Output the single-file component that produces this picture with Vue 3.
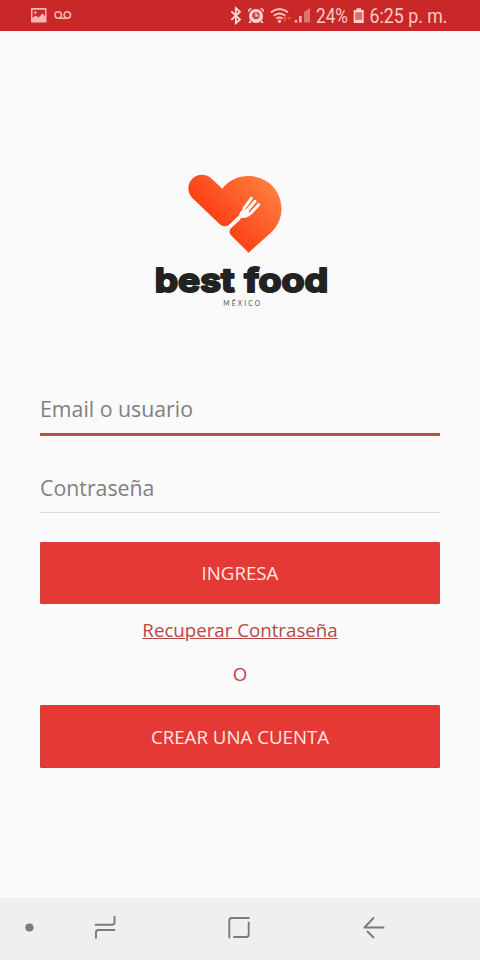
<script setup>
import { ref } from 'vue'

const user = ref('')
const password = ref('')
</script>

<template>
  <div class="screen">
    <header class="status">
      <svg width="480" height="31" viewBox="0 0 480 31">
        <g fill="#f8b5b2">
          <path fill-rule="evenodd" d="M32 8h13.500q1 0 1 1v12.500q0 1-1 1H32q-1 0-1-1V9q0-1 1-1zM32.500 9.700V18l3-2.500 3 2 4-4 2.600 2.700V9.700z" />
          <circle cx="35.300" cy="12.500" r="1.300" />
        </g>
        <g fill="none" stroke="#f8b5b2" stroke-width="1.500">
          <circle cx="58.200" cy="15" r="3.200" />
          <circle cx="67.300" cy="15" r="3.200" />
          <path d="M58.200 18.300h9.100" />
        </g>
        <path d="M231.300 11.300l8.700 8.200-4.200 3.700V8l4.200 3.700-8.700 8.200" fill="none" stroke="#ffd6d3" stroke-width="1.800" />
        <g fill="#ffd3cf">
          <circle cx="256" cy="16" r="7" />
          <path d="M248.200 12.200q-1-4 4-4.200zM263.800 12.200q1-4-4-4.200zM250 20l-1.500 3h3zM262 20l1.500 3h-3z" />
        </g>
        <circle cx="256" cy="15.500" r="3.800" fill="#d04444" />
        <path d="M256 12.500v3.300h2.600" fill="none" stroke="#ffd3cf" stroke-width="1.300" />
        <g fill="none" stroke="#ffc4c0" stroke-width="1.900">
          <path d="M271 12.300q8.500-6.600 17 0M273.700 15.700q5.800-4.600 11.600 0M276.500 18.800q3-2.400 6 0" />
        </g>
        <circle cx="279.500" cy="21.300" r="1.600" fill="#ffc4c0" />
        <path d="M282.500 18.500l2.200-3 2.200 3h-1.400v3h-1.600v-3zM287 17h4l-2 3z" fill="#f0564c" />
        <g fill="#f5aaa6">
          <rect x="294.800" y="20" width="2.500" height="2.500" />
          <rect x="299" y="16" width="2.700" height="6.500" />
        </g>
        <path d="M304 12l6-4v14.500h-6z" fill="#e2726f" />
        <text x="316" y="23" textLength="32" lengthAdjust="spacingAndGlyphs">24%</text>
        <path d="M356.500 8.300h4.500v1.700h2.700v13h-10V10h2.800z" fill="#ffd0cd" />
        <rect x="355.200" y="12.300" width="7" height="7.500" fill="#d9726f" />
        <text x="369.500" y="23" textLength="78" lengthAdjust="spacingAndGlyphs">6:25 p. m.</text>
      </svg>
    </header>

    <main class="content">
      <svg class="logo" width="200" height="160" viewBox="0 0 600 480">
        <defs>
          <linearGradient id="heart" gradientUnits="userSpaceOnUse" x1="390" y1="80" x2="250" y2="210">
            <stop offset="0" stop-color="#ff7a3d" />
            <stop offset="1" stop-color="#fc4116" />
          </linearGradient>
        </defs>
        <path d="M157 114A41 41 0 0 1 215 56L247 86Q276 48 327 48A98 98 0 0 1 396 215L326 278L273 226Q264 215 273 205L302 178L292 170L271 192Q256 205 241 194Z" fill="url(#heart)" />
        <path d="M261 208L307 164" stroke="#fafafa" stroke-width="10" />
        <path d="M298 173Q296 158 307 149L313 142L330 158L340 155L329 168Q315 177 298 173Z" fill="#fafafa" />
        <path d="M312 145L334 115M321 152L345 124M332 160L356 134" stroke="#fafafa" stroke-width="9" stroke-linecap="round" />
        <g class="brand">
          <text x="44" y="396" textLength="240" lengthAdjust="spacingAndGlyphs">best</text>
          <text x="313" y="396" textLength="252" lengthAdjust="spacingAndGlyphs">food</text>
        </g>
        <text class="country" x="250" y="437" textLength="110">MÉXICO</text>
      </svg>

      <form class="form" @submit.prevent>
        <input v-model="user" class="field active" type="text" placeholder="Email o usuario" />
        <input v-model="password" class="field" type="password" placeholder="Contraseña" />
        <button class="button" type="submit">INGRESA</button>
        <a class="recover">Recuperar Contraseña</a>
        <span class="or">O</span>
        <button class="button create" type="button">CREAR UNA CUENTA</button>
      </form>
    </main>

    <nav class="navigation">
      <svg width="480" height="62" viewBox="0 0 480 62" fill="none" stroke="#7b7b7b" stroke-width="1.900" stroke-linecap="round" stroke-linejoin="round">
        <circle cx="29.400" cy="29.500" r="4.100" fill="#7b7b7b" stroke="none" />
        <path d="M95.500 26.700h16.500q2.500 0 2.500-2.500v-5.500M96 40v-5.500q0-2.500 2.500-2.500h16" />
        <path d="M229.300 39.500V22.500q0-2.500 2.500-2.500h17M234 39h12.200q2.500 0 2.500-2.500V24.500" />
        <path d="M383.500 29.500H364.500L373.500 20M367.500 33.500l6 6" />
      </svg>
    </nav>
  </div>
</template>

<style>
body {
  margin: 0;
}
</style>

<style scoped>
.screen {
  width: 480px;
  height: 960px;
  display: flex;
  flex-direction: column;
  background: #fafafa;
  font-family: 'Open Sans', sans-serif;
}

.status {
  height: 31px;
  background: #c92829;
}

svg {
  display: block;
}

.status text {
  font-family: Roboto, sans-serif;
  font-size: 19.5px;
  fill: #ffc9c5;
}

.content {
  flex: 1;
  display: flex;
  flex-direction: column;
  padding: 129px 40px 0;
}

.logo {
  align-self: center;
}

.brand {
  font-family: Inter, sans-serif;
  font-size: 99px;
  font-weight: 700;
  fill: #222;
  stroke: #222;
  stroke-width: 6px;
  stroke-linejoin: round;
}

.country {
  font-family: Lato, sans-serif;
  font-size: 20px;
  fill: #555;
}

.form {
  display: flex;
  flex-direction: column;
  margin-top: 62px;
}

.field {
  box-sizing: border-box;
  height: 54px;
  margin: 0 0 23px;
  padding: 4px 0 0;
  border: 0;
  border-bottom: 1px solid #d9d9d9;
  outline: 0;
  background: transparent;
  font: 21.3px 'Open Sans', sans-serif;
  color: #777;
}

.field.active {
  padding-top: 1px;
  border-bottom: 3px solid #b94d51;
}

.field::placeholder {
  color: #808080;
  opacity: 1;
}

.button {
  box-sizing: border-box;
  height: 62px;
  padding: 0 0 2px;
  border: 1px solid #cc4140;
  border-radius: 1px;
  background: #e53935;
  color: #ffe9e3;
  font: 18.7px 'Open Sans', sans-serif;
}

.button.create {
  height: 63px;
  padding-bottom: 0;
}

.field + .button {
  margin-top: 6px;
}

.recover,
.or {
  align-self: center;
  font-size: 18.7px;
  line-height: 26px;
  color: #b84749;
}

.recover {
  margin-top: 13px;
  text-decoration: underline;
}

.or {
  margin: 18px 0;
}

.navigation {
  height: 62px;
  background: #efefef;
}
</style>
